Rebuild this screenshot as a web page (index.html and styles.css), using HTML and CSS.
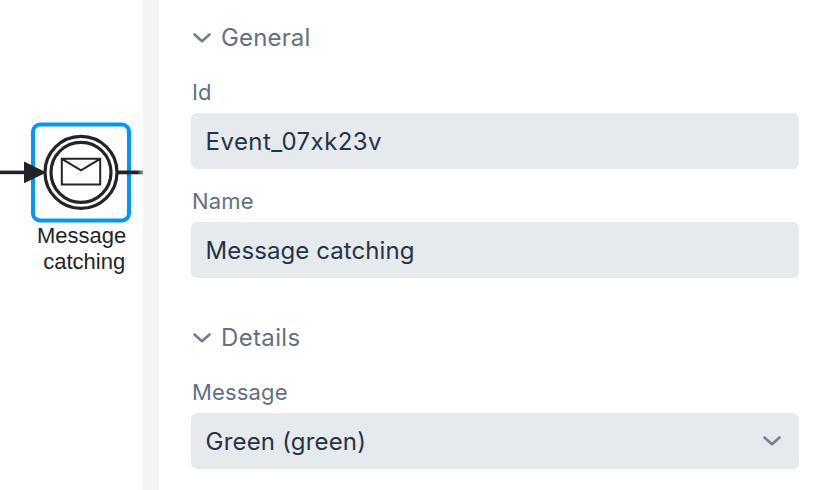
FILE: index.html
```html
<!DOCTYPE html>
<html lang="en">
<head>
<meta charset="utf-8">
<title>Properties</title>
<link rel="stylesheet" href="styles.css">
</head>
<body>
<main class="editor">
  <svg class="canvas" viewBox="0 0 143 490" width="143" height="490">
    <defs>
      <linearGradient id="fade" gradientUnits="userSpaceOnUse" x1="130" y1="0" x2="144" y2="0">
        <stop offset="0" stop-color="#22242a"/>
        <stop offset=".5" stop-color="#22242a"/>
        <stop offset="1" stop-color="#22242a" stop-opacity=".4"/>
      </linearGradient>
    </defs>
    <rect class="selection" x="33" y="124.5" width="96" height="96" rx="7"/>
    <path class="flow" d="M0 172.4H30"/>
    <rect x="117" y="170.5" width="26" height="3.8" fill="url(#fade)"/>
    <circle class="ring" cx="81" cy="172.4" r="36"/>
    <circle class="ring" cx="81" cy="172.4" r="30"/>
    <path class="arrow" d="M24 161.5L46.5 172.4L24 183.3Z"/>
    <path class="envelope" d="M61.8 158.8H100.2V184.4H61.8ZM61.8 158.8L81 170.3L100.2 158.8"/>
    <text class="label" x="37" y="243">Message</text>
    <text class="label" x="43.2" y="269">catching</text>
  </svg>
  <div class="divider"></div>
  <section class="panel">
    <h2 class="heading general"><svg class="chevron" viewBox="0 0 18 12"><path d="M1.5 2.5L9 9.2L16.5 2.5"/></svg>General</h2>
    <div class="field">
      <div class="name">Id</div>
      <div class="value identifier">Event_07xk23v</div>
    </div>
    <div class="field">
      <div class="name">Name</div>
      <div class="value">Message catching</div>
    </div>
    <h2 class="heading second">
      <svg class="chevron" viewBox="0 0 18 12"><path d="M1.5 2.5L9 9.2L16.5 2.5"/></svg>Details</h2>
    <div class="field">
      <div class="name">Message</div>
      <div class="value select">Green (green)<svg class="chevron" viewBox="0 0 18 12"><path d="M1.5 2.5L9 9.2L16.5 2.5"/></svg></div>
    </div>
  </section>
</main>
</body>
</html>
```
FILE: styles.css
```css
* { box-sizing: border-box; }
body { margin: 0; background: #fff; font-family: Inter, sans-serif; }
.editor { display: grid; grid-template-columns: 143px 16px 1fr; height: 490px; overflow: hidden; }
.canvas { display: block; }
.selection { fill: none; stroke: #0096ff; stroke-width: 4; }
.flow { stroke: #22242a; stroke-width: 3.6; }
.ring { fill: none; stroke: #22242a; stroke-width: 3.2; }
.arrow { fill: #22242a; }
.envelope { fill: none; stroke: #22242a; stroke-width: 2; }
.label { font: 22px "Liberation Sans", sans-serif; fill: #22242a; }
.divider { background: #f3f4f6; }
.panel { padding: 21px 15px 0 32px; }
.heading { display: flex; align-items: center; gap: 10px; height: 32px; margin: 0 0 23px 2px; font-size: 24px; font-weight: 420; letter-spacing: .35px; color: #637083; }
.general { letter-spacing: .15px; }
.second { margin-top: 43px; }
.chevron { width: 18px; height: 12px; fill: none; stroke: #717e8f; stroke-width: 2.6; stroke-linecap: round; stroke-linejoin: round; }
.heading .chevron { position: relative; top: 1px; }
.name { height: 37px; padding-left: 1px; font-size: 22px; font-weight: 420; line-height: 33px; letter-spacing: .15px; color: #637083; }
.value { display: flex; align-items: center; height: 56px; padding: 0 15px 0 14.6px; border-radius: 6px; background: #e6eaed; font-size: 24px; font-weight: 440; letter-spacing: .08px; color: #253447; }
.identifier { letter-spacing: .43px; }
.field + .field { margin-top: 16px; }
.select { justify-content: space-between; padding-right: 18px; letter-spacing: .18px; }
```
